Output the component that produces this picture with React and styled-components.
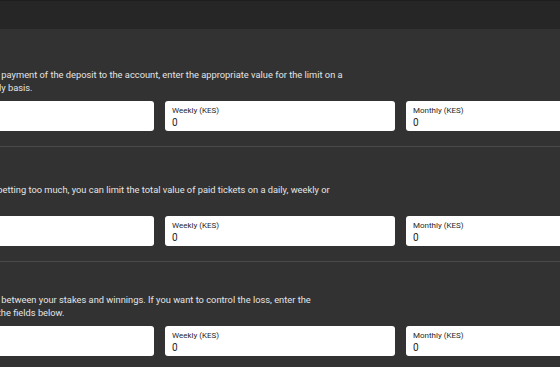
import React from 'react';
import styled, { createGlobalStyle } from 'styled-components';

const GlobalStyle = createGlobalStyle`
    html, body {
        margin: 0;
        padding: 0;
        background: #323232;
        overflow: hidden;
    }
    body {
        font-family: Roboto, "Liberation Sans", Arial, sans-serif;
    }
`;

const sections = [
    {
        title: 'Deposit limit',
        text: 'In order to cap the payment of the deposit to the account, enter the appropriate value for the limit on a weekly and monthly basis.',
        top: 17,
    },
    {
        title: 'Stake limit',
        text: 'If you are wary of betting too much, you can limit the total value of paid tickets on a daily, weekly or monthly basis.',
        top: 14,
    },
    {
        title: 'Loss limit',
        text: 'The net difference between your stakes and winnings. If you want to control the loss, enter the maximum limit in the fields below.',
        top: 9,
    },
];

const fields = ['Daily (KES)', 'Weekly (KES)', 'Monthly (KES)'];

const App = () => {
    return (
        <>
            <GlobalStyle />
            <Page>
                <TopBar />
                <Content>
                    {sections.map((s, i) => (
                        <Section key={i} $top={s.top} $last={i === sections.length - 1}>
                            <Title>{s.title}</Title>
                            <Description>{s.text}</Description>
                            <Fields>
                                {fields.map((f) => (
                                    <Field key={f}>
                                        <Label>{f}</Label>
                                        <Value>0</Value>
                                    </Field>
                                ))}
                            </Fields>
                        </Section>
                    ))}
                </Content>
            </Page>
        </>
    );
};

const Page = styled.div`
    width: 560px;
    height: 367px;
    overflow: hidden;
    background: #323232;
`;

const TopBar = styled.div`
    height: 29px;
    background: #262626;
    border-top: 1px solid #1e1e1e;
    box-sizing: border-box;
`;

const Content = styled.div`
    margin-left: -76px;
    width: 712px;
`;

const Section = styled.section`
    padding: ${(p) => p.$top}px 0 16px;
    position: relative;
    &::after {
        content: '';
        display: ${(p) => (p.$last ? 'none' : 'block')};
        position: absolute;
        left: 0;
        right: -200px;
        bottom: 0;
        height: 1px;
        background: #4a4a4a;
    }
`;

const Title = styled.h3`
    margin: 0 0 8px;
    font-size: 11px;
    line-height: 14px;
    font-weight: 500;
    color: #f0f0f0;
`;

const Description = styled.p`
    margin: 0 0 7px;
    width: 428px;
    min-height: 26px;
    font-size: 9.3px;
    line-height: 13px;
    color: #e4e4e4;
`;

const Fields = styled.div`
    display: grid;
    grid-template-columns: repeat(3, 230px);
    column-gap: 11px;
`;

const Field = styled.div`
    height: 30px;
    box-sizing: border-box;
    background: #ffffff;
    border-radius: 3px;
    padding: 5px 7px 0;
    display: flex;
    flex-direction: column;
`;

const Label = styled.span`
    font-size: 8px;
    line-height: 10px;
    color: #262626;
`;

const Value = styled.span`
    font-size: 10px;
    line-height: 13px;
    color: #1e1e1e;
`;

export default App;
